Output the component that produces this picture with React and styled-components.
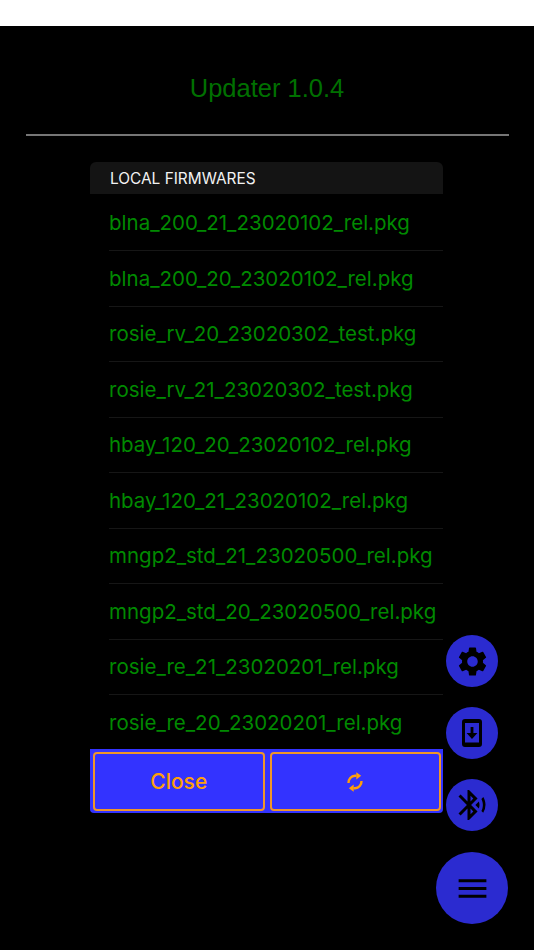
import React from 'react'
import styled, { createGlobalStyle } from 'styled-components'
import { MdSettings, MdBluetoothAudio, MdMenu } from 'react-icons/md'

const firmwares = [
  'blna_200_21_23020102_rel.pkg',
  'blna_200_20_23020102_rel.pkg',
  'rosie_rv_20_23020302_test.pkg',
  'rosie_rv_21_23020302_test.pkg',
  'hbay_120_20_23020102_rel.pkg',
  'hbay_120_21_23020102_rel.pkg',
  'mngp2_std_21_23020500_rel.pkg',
  'mngp2_std_20_23020500_rel.pkg',
  'rosie_re_21_23020201_rel.pkg',
  'rosie_re_20_23020201_rel.pkg',
]

const SyncHalf = (props) => (
  <g {...props}>
    <path d="M1.5 11 A6.8 6.8 0 0 1 8 3.8 H9.5" stroke="currentColor" strokeWidth="2.4" />
    <polygon points="9.3,0.2 14.2,3.8 9.3,7.4" fill="currentColor" />
  </g>
)

const SyncIcon = () => (
  <svg width="16" height="20" viewBox="0 0 16 20" fill="none">
    <SyncHalf />
    <SyncHalf transform="rotate(180 8 10)" />
  </svg>
)

const PhoneDownloadIcon = () => (
  <svg width="20" height="28" viewBox="0 0 20 28">
    <path
      fill="currentColor"
      fillRule="evenodd"
      d="M3 0 H17 A3 3 0 0 1 20 3 V25 A3 3 0 0 1 17 28 H3 A3 3 0 0 1 0 25 V3 A3 3 0 0 1 3 0 Z M3 4 V23.5 H17 V4 Z"
    />
    <path fill="currentColor" d="M8.6 8 H11.4 V14 H15.4 L10 20 L4.6 14 H8.6 Z" />
  </svg>
)

const App = () => {
  return (
    <>
      <GlobalStyle />
      <StatusBar />
      <Screen>
        <Title>Updater 1.0.4</Title>
        <Divider />
        <Panel>
          <SectionHeader>LOCAL FIRMWARES</SectionHeader>
          <RowList>
            {firmwares.map((name) => (
              <Row key={name}>{name}</Row>
            ))}
          </RowList>
          <Actions>
            <ActionButton>Close</ActionButton>
            <ActionButton>
              <SyncIcon />
            </ActionButton>
          </Actions>
        </Panel>
        <FabColumn>
          <Fab><MdSettings size={35} /></Fab>
          <Fab><PhoneDownloadIcon /></Fab>
          <Fab><MdBluetoothAudio size={36} /></Fab>
          <MainFab><MdMenu size={37} /></MainFab>
        </FabColumn>
      </Screen>
    </>
  )
}

export default App

const GlobalStyle = createGlobalStyle`
  html, body {
    margin: 0;
    padding: 0;
    background: #000;
  }
`

const StatusBar = styled.div`
  height: 26px;
  background: #fff;
`

const Screen = styled.div`
  position: relative;
  height: 924px;
  background: #000;
  overflow: hidden;
  display: flex;
  flex-direction: column;
  align-items: flex-start;
`

const Title = styled.h1`
  align-self: center;
  margin: 0;
  padding-top: 47px;
  height: 61px;
  line-height: 30px;
  font-family: "Liberation Sans", Arial, sans-serif;
  font-size: 25.5px;
  font-weight: 400;
  color: #007000;
`

const Divider = styled.div`
  width: 483px;
  height: 1.5px;
  margin: 0 0 26.5px 25.5px;
  background: #767676;
`

const Panel = styled.div`
  width: 353px;
  margin-left: 90px;
  display: flex;
  flex-direction: column;
`

const SectionHeader = styled.div`
  height: 32px;
  box-sizing: border-box;
  padding-left: 20px;
  display: flex;
  align-items: center;
  background: #141414;
  border-radius: 6px 6px 0 0;
  font-family: Inter, "Liberation Sans", sans-serif;
  font-size: 15.4px;
  color: #f2f2f2;
`

const RowList = styled.div`
  padding-top: 1.5px;
  display: flex;
  flex-direction: column;
`

const Row = styled.div`
  height: 55.5px;
  box-sizing: border-box;
  margin-left: 19px;
  display: flex;
  align-items: center;
  border-bottom: 1px solid #161616;
  font-family: Inter, "Liberation Sans", sans-serif;
  font-size: 20.5px;
  color: #008a00;
  white-space: nowrap;

  &:last-child {
    height: 54px;
    border-bottom: none;
  }
`

const Actions = styled.div`
  height: 64px;
  box-sizing: border-box;
  padding: 3px 2px 2px 3px;
  display: grid;
  grid-template-columns: 1fr 1fr;
  gap: 5px;
  background: #3333ff;
  border-radius: 0 0 4px 4px;
`

const ActionButton = styled.div`
  display: flex;
  align-items: center;
  justify-content: center;
  border: 2px solid #f0962a;
  border-radius: 4px;
  font-family: Inter, "Liberation Sans", sans-serif;
  font-size: 21px;
  font-weight: 500;
  color: #ff9f0a;
`

const FabColumn = styled.div`
  position: absolute;
  top: 609px;
  right: 26px;
  width: 72px;
  display: flex;
  flex-direction: column;
  align-items: center;
  gap: 20px;
`

const Fab = styled.div`
  width: 52px;
  height: 52px;
  border-radius: 50%;
  background: #2b2bd0;
  color: #000;
  display: flex;
  align-items: center;
  justify-content: center;
`

const MainFab = styled(Fab)`
  width: 72px;
  height: 72px;
  margin-top: 1px;
`
